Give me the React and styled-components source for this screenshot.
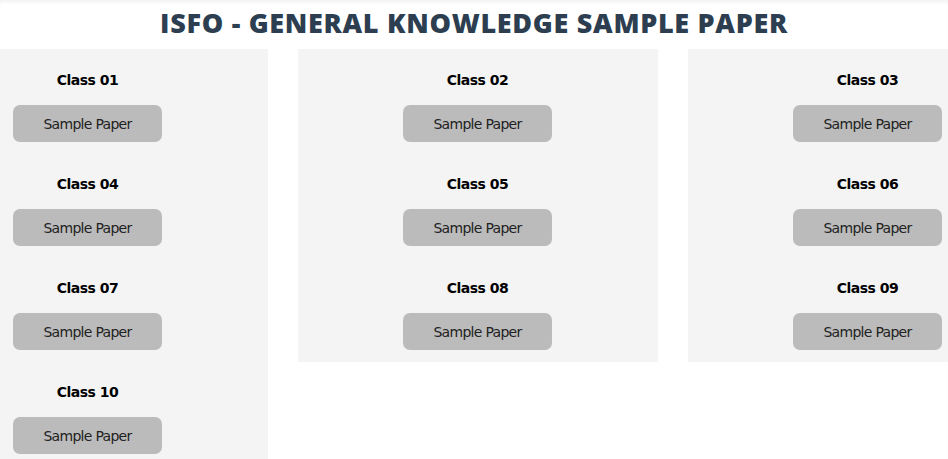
import React from "react";
import styled, { createGlobalStyle } from "styled-components";

const GlobalStyle = createGlobalStyle`
  html, body {
    margin: 0;
    padding: 0;
    background: #ffffff;
    overflow: hidden;
  }
`;

const Page = styled.div`
  width: 948px;
  height: 459px;
  overflow: hidden;
  box-shadow: inset 0 4px 4px -2px rgba(0, 0, 0, 0.06);
`;

const Title = styled.h1`
  margin: 0;
  padding: 6px 0 0;
  height: 42px;
  box-sizing: border-box;
  text-align: center;
  font-family: "Open Sans", "Noto Sans", sans-serif;
  font-size: 27px;
  line-height: 34px;
  font-weight: 800;
  color: #2c3e50;
  letter-spacing: 0.7px;
  text-transform: uppercase;
`;

const Grid = styled.div`
  display: grid;
  grid-template-columns: repeat(3, 360px);
  column-gap: 30px;
  align-items: start;
  margin-top: 7px;
  margin-left: -92.5px;
  width: 1140px;
`;

const Column = styled.div`
  background: #f4f4f4;
  display: flex;
  flex-direction: column;
  align-items: center;
  padding: 22px 0 12px;
`;

const Item = styled.div`
  display: flex;
  flex-direction: column;
  align-items: center;
  & + & {
    margin-top: 33px;
  }
`;

const Label = styled.div`
  font-family: "DejaVu Sans", "Noto Sans", sans-serif;
  font-size: 14px;
  font-weight: 700;
  color: #000;
  line-height: 18px;
  letter-spacing: -0.5px;
  margin-bottom: 16px;
`;

const PaperButton = styled.button`
  display: block;
  width: 149px;
  height: 37px;
  border: none;
  border-radius: 7px;
  background: #bbbbbb;
  color: #222;
  font-family: "DejaVu Sans", "Noto Sans", sans-serif;
  font-size: 14px;
  letter-spacing: -0.7px;
  cursor: pointer;
  padding: 0;
`;

const columns = [
  ["01", "04", "07", "10"],
  ["02", "05", "08"],
  ["03", "06", "09"],
];

export default function App() {
  return (
    <>
      <GlobalStyle />
      <Page>
        <Title>ISFO - General Knowledge Sample Paper</Title>
        <Grid>
          {columns.map((col, i) => (
            <Column key={i}>
              {col.map((n) => (
                <Item key={n}>
                  <Label>Class {n}</Label>
                  <PaperButton>Sample Paper</PaperButton>
                </Item>
              ))}
            </Column>
          ))}
        </Grid>
      </Page>
    </>
  );
}
